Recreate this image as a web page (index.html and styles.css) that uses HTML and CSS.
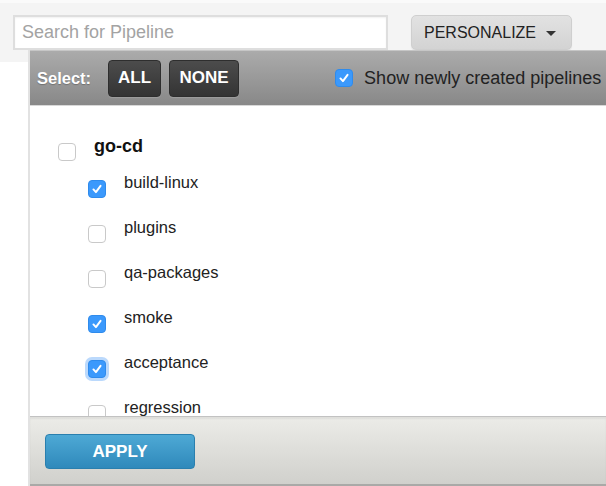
FILE: index.html
```html
<!DOCTYPE html>
<html lang="en">
<head>
<meta charset="utf-8">
<title>Pipelines</title>
<link rel="stylesheet" href="styles.css">
</head>
<body>
<div class="topbar">
  <input class="search" type="text" placeholder="Search for Pipeline">
  <button class="personalize">PERSONALIZE <span class="caret"></span></button>
</div>

<div class="panel">
  <div class="panel-head">
    <span class="select-label">Select:</span>
    <button class="dark-btn btn-all">ALL</button>
    <button class="dark-btn btn-none">NONE</button>
    <span class="cb checked show-new"><svg viewBox="0 0 18 18" width="18" height="18"><path d="M5 9.5 L7.8 12.5 L13 5.5" fill="none" stroke="#fff" stroke-width="2.2" stroke-linecap="round" stroke-linejoin="round"/></svg></span>
    <span class="show-label">Show newly created pipelines</span>
  </div>

  <div class="panel-body">
    <div class="group-row">
      <span class="cb"></span>
      <span class="group-name">go-cd</span>
    </div>
    <div class="item-row">
      <span class="cb checked"><svg viewBox="0 0 18 18" width="18" height="18"><path d="M5 9.5 L7.8 12.5 L13 5.5" fill="none" stroke="#fff" stroke-width="2.2" stroke-linecap="round" stroke-linejoin="round"/></svg></span>
      <span class="item-name">build-linux</span>
    </div>
    <div class="item-row">
      <span class="cb"></span>
      <span class="item-name">plugins</span>
    </div>
    <div class="item-row">
      <span class="cb"></span>
      <span class="item-name">qa-packages</span>
    </div>
    <div class="item-row">
      <span class="cb checked"><svg viewBox="0 0 18 18" width="18" height="18"><path d="M5 9.5 L7.8 12.5 L13 5.5" fill="none" stroke="#fff" stroke-width="2.2" stroke-linecap="round" stroke-linejoin="round"/></svg></span>
      <span class="item-name">smoke</span>
    </div>
    <div class="item-row">
      <span class="cb checked focused"><svg viewBox="0 0 18 18" width="18" height="18"><path d="M5 9.5 L7.8 12.5 L13 5.5" fill="none" stroke="#fff" stroke-width="2.2" stroke-linecap="round" stroke-linejoin="round"/></svg></span>
      <span class="item-name">acceptance</span>
    </div>
    <div class="item-row">
      <span class="cb"></span>
      <span class="item-name">regression</span>
    </div>
  </div>

  <div class="panel-foot">
    <button class="apply">APPLY</button>
  </div>
</div>
</body>
</html>
```

FILE: styles.css
```css
* { box-sizing: border-box; }

html, body {
  margin: 0;
  padding: 0;
  height: 100%;
}

body {
  font-family: "Liberation Sans", Arial, Helvetica, sans-serif;
  background: #fff;
  color: #222;
  overflow: hidden;
  position: relative;
}

.topbar {
  height: 62px;
  background: #f4f4f4;
  border-top: 3px solid #fafafa;
  padding: 12px 13px 0 13px;
  display: flex;
  align-items: flex-start;
  gap: 23px;
}

.search {
  width: 375px;
  height: 35px;
  border: 2px solid #dedede;
  background: #fff;
  font-family: inherit;
  font-size: 18px;
  padding: 0 7px;
  color: #333;
  outline: none;
  box-shadow: inset 0 1px 2px rgba(0,0,0,0.06);
}

.search::placeholder {
  color: #a3a3a3;
}

.personalize {
  width: 161px;
  height: 35px;
  border: 1px solid #cfcfcf;
  border-radius: 5px;
  background: linear-gradient(#e2e2e2, #d3d3d3);
  font-family: inherit;
  font-size: 16px;
  color: #222;
  padding: 0 0 0 12px;
  display: flex;
  align-items: center;
  gap: 10px;
  box-shadow: 0 1px 1px rgba(0,0,0,0.08);
}

.caret {
  width: 0;
  height: 0;
  border-left: 5px solid transparent;
  border-right: 5px solid transparent;
  border-top: 5px solid #333;
  margin-top: 1px;
}

.panel {
  position: absolute;
  left: 28px;
  top: 50px;
  right: 0;
  bottom: 0;
  border-left: 2px solid #e2e2e2;
  background: #fff;
  display: flex;
  flex-direction: column;
}

.panel-head {
  height: 56px;
  flex: none;
  background: linear-gradient(#ababab, #888888);
  border-top: 1px solid #c6c6c6;
  border-bottom: 1px solid #d8d8d8;
  display: flex;
  align-items: center;
  padding-left: 7px;
  white-space: nowrap;
}

.select-label {
  color: #fff;
  font-weight: bold;
  font-size: 16.5px;
  text-shadow: 0 1px 1px rgba(0,0,0,0.25);
  margin-right: 17px;
}

.dark-btn {
  height: 37px;
  border: 1px solid #2e2e2e;
  border-radius: 4px;
  background: linear-gradient(#4c4c4c, #343434);
  color: #fff;
  font-family: inherit;
  font-weight: bold;
  font-size: 17px;
  padding: 0;
  box-shadow: 0 1px 1px rgba(255,255,255,0.15);
}

.btn-all { width: 53px; margin-right: 8px; }
.btn-none { width: 70px; }

.cb {
  flex: none;
  width: 18px;
  height: 18px;
  border: 1px solid #c9c9c9;
  border-radius: 4px;
  background: #fff;
  display: inline-flex;
  align-items: center;
  justify-content: center;
  overflow: hidden;
}

.cb svg { display: block; }

.cb.checked {
  background: #3b99fc;
  border-color: #2f8bec;
}

.cb.focused {
  box-shadow: 0 0 0 3px rgba(120, 180, 250, 0.5);
}

.show-new {
  margin-left: 96px;
  margin-right: 11px;
}

.show-label {
  font-size: 18px;
  color: #222;
}

.panel-body {
  flex: 1;
  overflow: hidden;
  padding: 29px 0 0 28px;
}

.group-row {
  display: flex;
  align-items: flex-start;
  gap: 18px;
  height: 37px;
}

.group-row .cb { margin-top: 8px; }

.group-name {
  font-weight: bold;
  font-size: 18px;
  line-height: 22px;
  color: #111;
}

.item-row {
  display: flex;
  align-items: flex-start;
  gap: 18px;
  height: 45px;
  padding-left: 30px;
}

.item-row .cb { margin-top: 8px; }

.item-name {
  font-size: 16.5px;
  line-height: 20px;
  color: #222;
}

.panel-foot {
  flex: none;
  height: 70px;
  border-top: 1px solid #c2c2c2;
  border-bottom: 2px solid #a9a9a7;
  background: linear-gradient(#ecece8, #d0d0cc);
  padding: 17px 0 0 15px;
  box-shadow: inset 0 2px 2px rgba(0,0,0,0.06);
}

.apply {
  width: 150px;
  height: 35px;
  border: 1px solid #2a7fae;
  border-radius: 4px;
  background: linear-gradient(#4ea9d5, #2f89bb);
  color: #fff;
  font-family: inherit;
  font-weight: bold;
  font-size: 17px;
  padding: 0;
}
```
